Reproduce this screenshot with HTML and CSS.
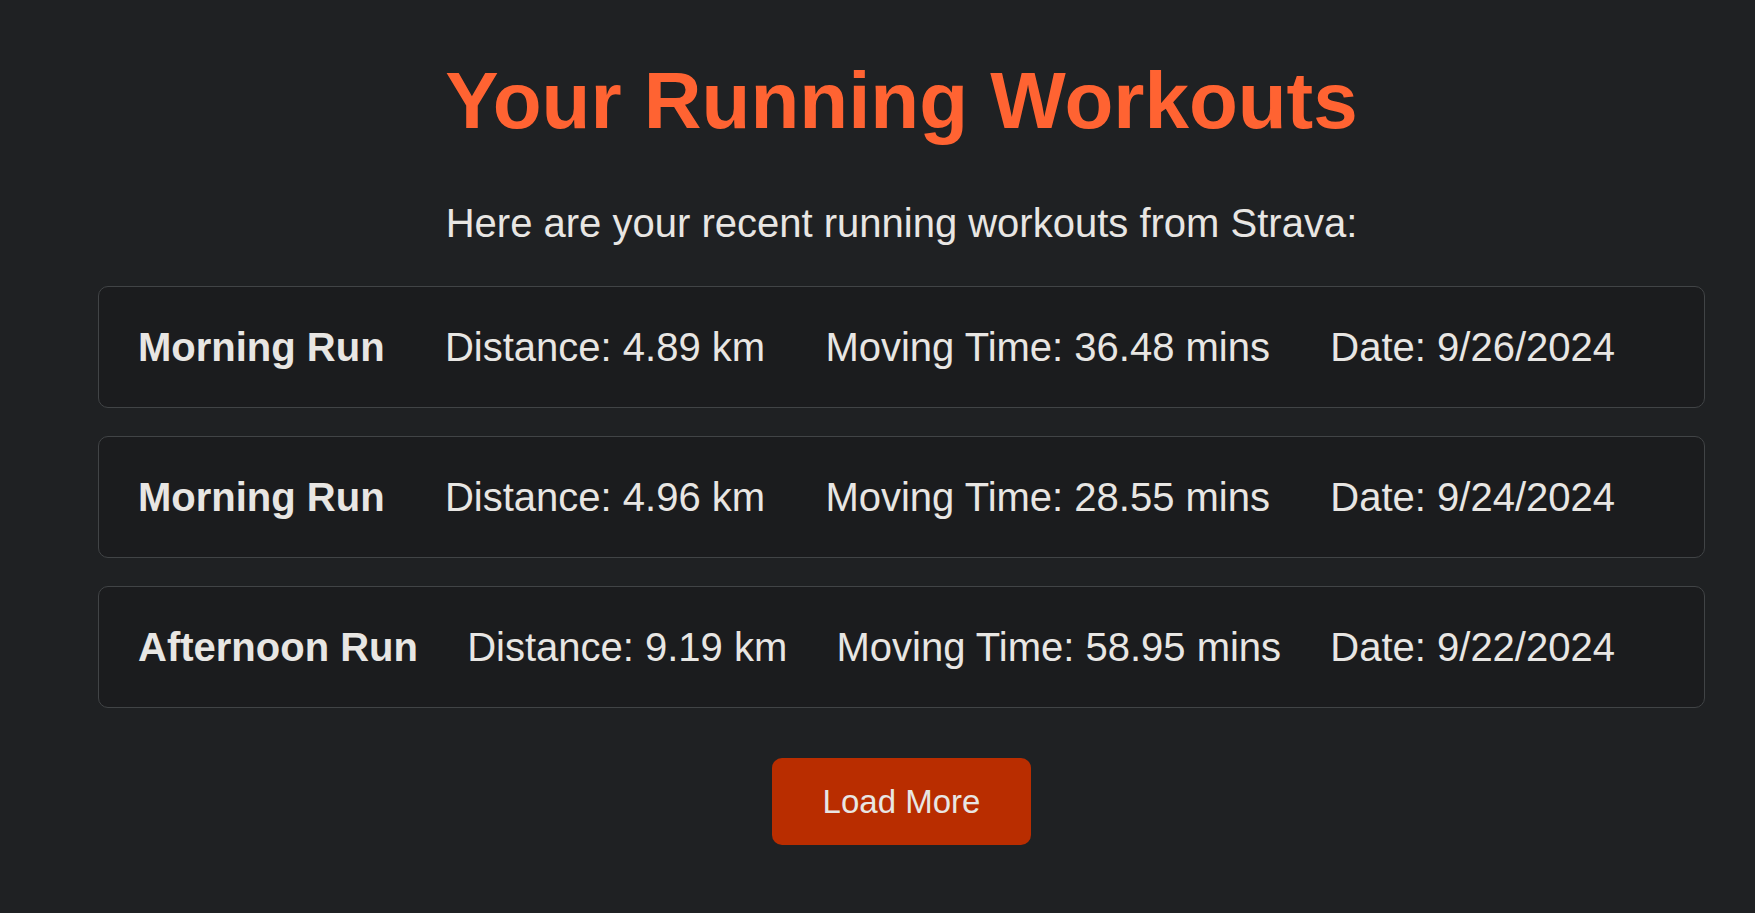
FILE: index.html
```html
<!DOCTYPE html>
<html lang="en">
<head>
<meta charset="utf-8">
<title>Your Running Workouts</title>
<link rel="stylesheet" href="styles.css">
</head>
<body>
<main class="page">
  <h1 class="title">Your Running Workouts</h1>
  <p class="subtitle">Here are your recent running workouts from Strava:</p>
  <ul class="workouts">
    <li class="workout">
      <span class="name">Morning Run</span>
      <span class="stat">Distance: 4.89 km</span>
      <span class="stat">Moving Time: 36.48 mins</span>
      <span class="stat">Date: 9/26/2024</span>
    </li>
    <li class="workout">
      <span class="name">Morning Run</span>
      <span class="stat">Distance: 4.96 km</span>
      <span class="stat">Moving Time: 28.55 mins</span>
      <span class="stat">Date: 9/24/2024</span>
    </li>
    <li class="workout">
      <span class="name">Afternoon Run</span>
      <span class="stat">Distance: 9.19 km</span>
      <span class="stat">Moving Time: 58.95 mins</span>
      <span class="stat">Date: 9/22/2024</span>
    </li>
  </ul>
  <div class="actions">
    <button class="load-more" type="button">Load More</button>
  </div>
</main>
</body>
</html>
```

FILE: styles.css
```css
html, body {
  margin: 0;
  padding: 0;
  background: #1f2123;
}

body {
  font-family: "Liberation Sans", Arial, sans-serif;
  color: #e8e6e3;
}

.page {
  padding: 55px 50px 40px 98px;
}

.title {
  margin: 0 0 53px;
  font-size: 80px;
  line-height: 92px;
  font-weight: 700;
  color: #ff6332;
  text-align: center;
}

.subtitle {
  margin: 0 0 40px;
  font-size: 40px;
  line-height: 46px;
  text-align: center;
}

.workouts {
  list-style: none;
  margin: 0;
  padding: 0;
  display: flex;
  flex-direction: column;
  gap: 28px;
}

.workout {
  display: flex;
  justify-content: space-between;
  align-items: center;
  padding: 37px 89px 37px 39px;
  background: #1b1c1e;
  border: 1px solid #414446;
  border-radius: 10px;
  font-size: 40px;
  line-height: 46px;
}

.name {
  font-weight: 700;
}

.actions {
  display: flex;
  justify-content: center;
  margin-top: 50px;
}

.load-more {
  font-family: "Liberation Sans", Arial, sans-serif;
  font-size: 33px;
  line-height: 37px;
  padding: 25px 51px;
  border: none;
  border-radius: 10px;
  background: #b92d00;
  color: #e8e6e3;
  cursor: pointer;
}
```
